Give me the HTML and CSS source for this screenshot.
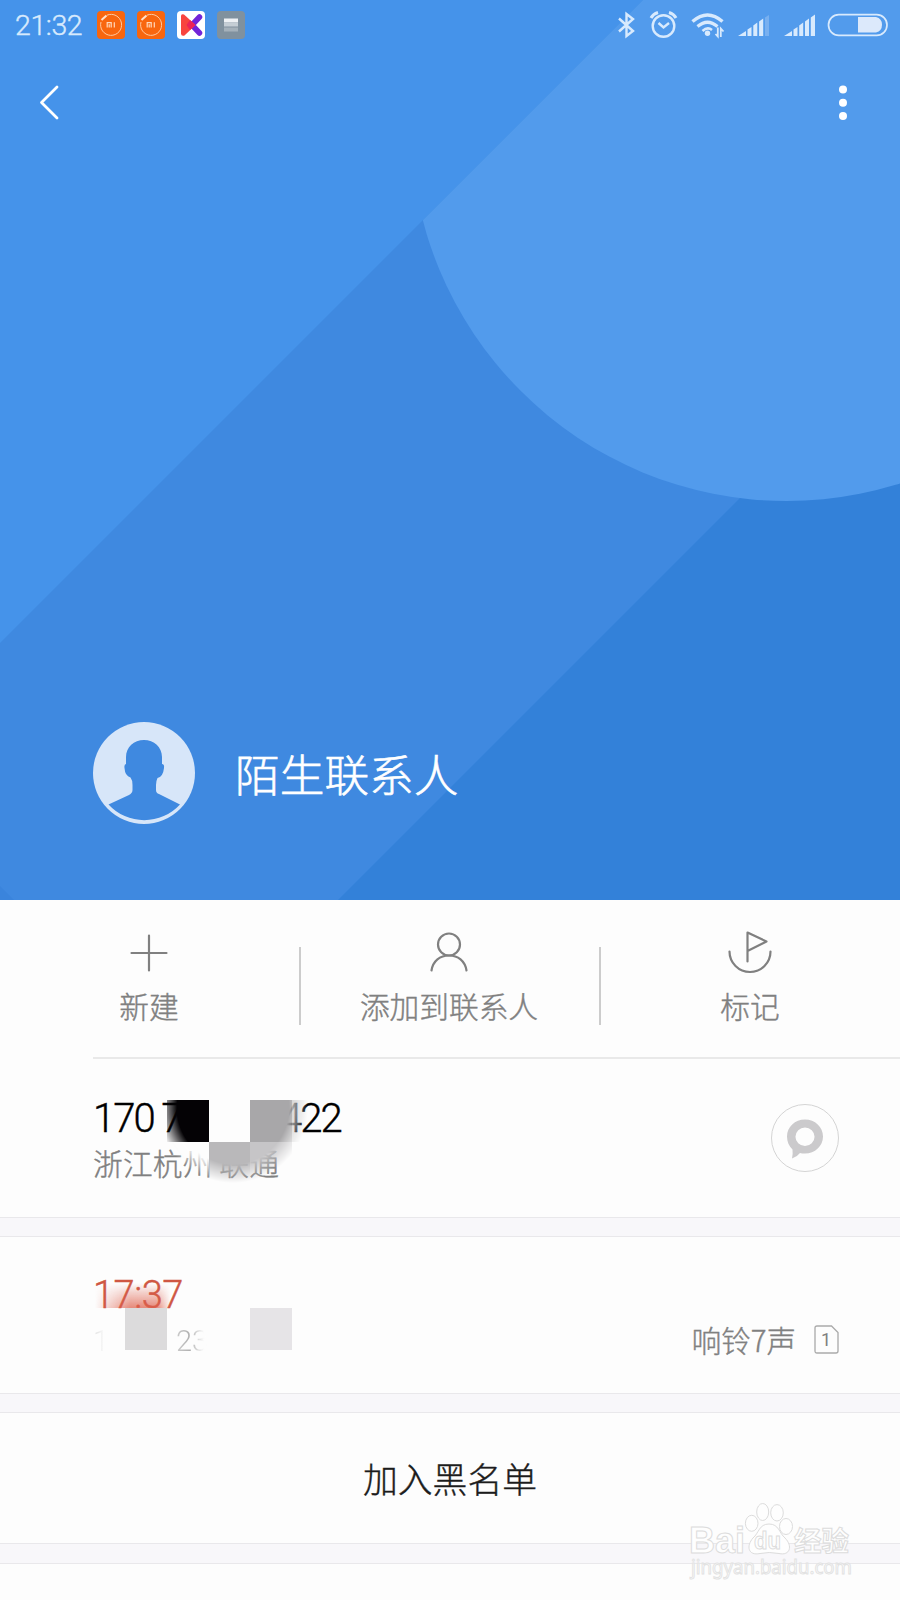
FILE: index.html
```html
<!DOCTYPE html>
<html lang="zh-CN">
<head>
    <meta charset="UTF-8">
    <meta name="viewport" content="width=device-width, initial-scale=1.0">
    <title>陌生联系人</title>
    <link rel="stylesheet" href="styles.css">
</head>
<body>
    <div class="hero">
        <svg class="hero-bg" viewBox="0 0 900 900">
            <defs>
                <clipPath id="band"><path d="M643 0H900V900H0V643Z"/></clipPath>
            </defs>
            <rect width="900" height="900" fill="#4593ea"/>
            <path d="M643 0H900V900H0V643Z" fill="#3f89e0"/>
            <path d="M900 338V900H338Z" fill="#3381d9"/>
            <path d="M0 886L14 900H0Z" fill="#3a84dc"/>
            <circle cx="786.500" cy="125" r="376" fill="#529bec" clip-path="url(#band)"/>
        </svg>

        <div class="status-bar">
            <span class="clock">21:32</span>
            <div class="notices">
                <svg width="30" height="30" viewBox="0 0 30 30">
                    <rect x="1" y="1" width="28" height="28" rx="4" fill="#f8660f"/>
                    <path d="M11 5.2A10.5 10.5 0 1 1 5 12" fill="none" stroke="#ffc9a0" stroke-width="1"/>
                    <path d="M5.5 10L10.5 5.5" stroke="#ffe3cf" stroke-width="2"/>
                    <path d="M11.200 17.500V12.700H15.200V17.500M13.200 14.200V17.500M18.300 12.300V17.500" fill="none" stroke="#ffd9bd" stroke-width="1.200"/>
                </svg>
                <svg width="30" height="30" viewBox="0 0 30 30">
                    <rect x="1" y="1" width="28" height="28" rx="4" fill="#f8660f"/>
                    <path d="M11 5.2A10.5 10.5 0 1 1 5 12" fill="none" stroke="#ffc9a0" stroke-width="1"/>
                    <path d="M5.5 10L10.5 5.5" stroke="#ffe3cf" stroke-width="2"/>
                    <path d="M11.200 17.500V12.700H15.200V17.500M13.200 14.200V17.500M18.300 12.300V17.500" fill="none" stroke="#ffd9bd" stroke-width="1.200"/>
                </svg>
                <svg width="30" height="30" viewBox="0 0 30 30">
                    <rect x="1" y="1" width="28" height="28" rx="4" fill="#fff"/>
                    <path d="M23.500 7L16 15L23.500 23" fill="none" stroke="#7224d8" stroke-width="5.500" stroke-linecap="round" stroke-linejoin="round"/>
                    <path d="M5 6Q5 3.500 8 4.500L19.500 15L8.500 25.500Q5 26.500 5 23.500Z" fill="#f8443f"/>
                    <path d="M14 10L19.500 15L14 20L10.500 15Z" fill="#ec2358"/>
                </svg>
                <svg width="30" height="30" viewBox="0 0 30 30">
                    <rect x="1" y="1" width="28" height="28" rx="4" fill="#80919e"/>
                    <rect x="8" y="8.500" width="14" height="4" fill="#eef1f4"/>
                    <rect x="8" y="12.500" width="14" height="4" fill="#c5ced5"/>
                    <rect x="8" y="17.500" width="14" height="4" fill="#a5b1ba"/>
                </svg>
            </div>
            <svg class="system" width="280" height="32" viewBox="612 9 280 32">
                <g fill="none" stroke="#d8eafd" stroke-width="2.400">
                    <path d="M619 18.500L633 31L626.500 36V14L633 19L619 31.500"/>
                    <circle cx="663.500" cy="26" r="10.800"/>
                    <path d="M658.500 23L663.500 27.500L669 23"/>
                    <path d="M651 18Q653 14 658 12.500M676 18Q674 14 669 12.500" stroke-width="3"/>
                    <path d="M692.500 21.500Q707.500 8.500 722.500 21.500" stroke-width="3.400"/>
                    <path d="M697.500 26.500Q707.500 18 717.500 26.500" stroke-width="3.200"/>
                    <path d="M702.500 31Q707.500 26.500 712 30" stroke-width="2.600"/>
                    <path d="M717.800 27.500V36.500L715.500 34M720.800 37V28.500L723.500 31.500" stroke-width="1.800"/>
                    <rect x="828.500" y="14.700" width="58.500" height="20.600" rx="10.300" stroke-width="1.700"/>
                </g>
                <g fill="#d8eafd">
                    <circle cx="707.500" cy="33.300" r="2.700"/>
                    <path d="M738 36L746 31V36ZM747.500 29.500L751.500 27V36H747.500ZM753.300 25.500L757.300 22.500V36H753.300ZM759.100 21.500L763.200 18.500V36H759.100Z"/>
                    <path d="M784 36L792 31V36ZM793.500 29.500L797.500 27V36H793.500ZM799.200 25.500L803.200 22.500V36H799.200ZM805 21.500L809 18.500V36H805ZM810.800 17.500L815 14.500V36H810.800Z"/>
                    <path d="M858 17H876A8 8 0 0 1 876 32.500H858Z" fill="#dce9fb"/>
                </g>
                <path d="M765 17.500L769 15V36H765Z" fill="#78b0f0"/>
            </svg>
        </div>

        <div class="nav">
            <svg width="24" height="40" viewBox="0 0 24 40">
                <path d="M21 5L5.500 20.500L21 36" fill="none" stroke="#fff" stroke-width="2.800" stroke-linecap="round" stroke-linejoin="round"/>
            </svg>
            <svg width="10" height="40" viewBox="0 0 10 40" fill="#fff">
                <circle cx="5" cy="7.500" r="4"/>
                <circle cx="5" cy="20.800" r="4"/>
                <circle cx="5" cy="34" r="4"/>
            </svg>
        </div>

        <div class="profile">
            <svg width="102" height="102" viewBox="0 0 102 102">
                <circle cx="51" cy="51" r="51" fill="#d7e6f9"/>
                <path d="M51 18C61 18 69 25 69 35V42Q71.500 42 71 46Q70 55 64.500 56Q63 59 63 63V68Q63 71 66 72L87 82.500A48.500 48.500 0 0 1 15.500 82.500L36 73Q39.500 71 39.500 68V63Q39.500 58 37.500 55.500Q32 54 31.500 46Q31 42 33 42V35C33 25 41 18 51 18Z" fill="#3f89e0"/>
            </svg>
            <span class="name">陌生联系人</span>
        </div>
    </div>

    <div class="actions">
        <div class="action">
            <svg width="48" height="48" viewBox="0 0 48 48">
                <path d="M24 6.500V41.500M6.500 24H41.500"/>
            </svg>
            <span>新建</span>
        </div>
        <div class="action">
            <svg width="48" height="48" viewBox="0 0 48 48">
                <circle cx="24" cy="15.500" r="11"/>
                <path d="M6.500 41.500C8 32 15 26.500 24 26.500S40 32 41.500 41.500"/>
            </svg>
            <span>添加到联系人</span>
        </div>
        <div class="action">
            <svg width="48" height="48" viewBox="0 0 48 48">
                <path d="M3.500 22.500A20.500 20.500 0 0 0 44.500 22.500M21.500 32.500V3.500L40.500 12.500L21.500 22"/>
            </svg>
            <span>标记</span>
        </div>
    </div>

    <div class="row phone">
        <div>
            <div class="number"><span>170 7</span><span>422</span></div>
            <div class="region">浙江杭州 联通</div>
        </div>
        <svg width="68" height="68" viewBox="0 0 68 68">
            <circle cx="34" cy="34" r="33.500" fill="none" stroke="#d4d4d4"/>
            <path fill-rule="evenodd" fill="#cbcacc" d="M34 15.500C44 15.500 52 23 52 32.500S44 49.500 34 49.500Q31 49.500 29 49Q26 53 21 54.500Q22 50 21.500 45.500C18 42 16 38 16 32.500C16 23 24 15.500 34 15.500ZM34 23.500A9.500 9.200 0 1 0 34 42A9.500 9.200 0 1 0 34 23.500Z"/>
        </svg>
        <div class="mosaic">
            <i class="black"></i><i class="white"></i><i class="gray"></i><i class="pale"></i>
            <i class="white"></i><i class="silver"></i><i class="light"></i><i class="white"></i>
        </div>
    </div>

    <div class="row call">
        <div class="when">
            <div class="time">17:37</div>
            <div class="date"><span>1</span><span>23</span></div>
        </div>
        <div class="ring">
            <span>响铃7声</span>
            <svg width="25" height="29" viewBox="0 0 25 29">
                <path d="M3 1H17.500L24 7.500V26Q24 28 22 28H3Q1 28 1 26V3Q1 1 3 1Z" fill="none" stroke="#aaa" stroke-width="1.300"/>
                <text x="12" y="20.500" text-anchor="middle">1</text>
            </svg>
        </div>
        <div class="smear"></div>
        <div class="block"></div>
        <div class="block second"></div>
    </div>

    <div class="row blacklist">加入黑名单</div>

    <svg class="watermark" width="190" height="95" viewBox="0 0 190 95">
        <g fill="#fefefe" stroke="#dcdcdc">
            <text class="logo" x="7" y="53" font-size="37" textLength="56" lengthAdjust="spacingAndGlyphs">Bai</text>
            <ellipse cx="69.700" cy="23.300" rx="6.300" ry="8"/>
            <ellipse cx="80.700" cy="12" rx="6" ry="8.500"/>
            <ellipse cx="95" cy="12.800" rx="6.300" ry="8.200"/>
            <ellipse cx="104" cy="26.500" rx="6.500" ry="8"/>
            <path d="M87 24C97 24 97 33 103 38C111 46 108 56 97 53.500Q87 51.500 78 53.500C66 56 64 46 71 38C77 33 77 24 87 24Z"/>
            <text class="logo" x="72" y="49" font-size="24" textLength="27" lengthAdjust="spacingAndGlyphs">du</text>
            <text class="logo" x="112" y="51" font-size="27.500">经验</text>
            <text class="site" x="9" y="74" font-size="20" textLength="161" lengthAdjust="spacingAndGlyphs">jingyan.baidu.com</text>
        </g>
    </svg>
</body>
</html>
```
FILE: styles.css
```css
* {
    box-sizing: border-box;
}
body {
    position: relative;
    width: 900px;
    height: 1600px;
    margin: 0;
    overflow: hidden;
    background: #fdfdfd;
    color: #808080;
    font-family: "Noto Sans CJK SC", sans-serif;
    font-weight: 300;
    font-size: 29.7px;
    -webkit-text-stroke: 0.4px;
}
svg {
    display: block;
    flex: none;
}
.hero {
    position: relative;
    display: flex;
    flex-direction: column;
    height: 900px;
}
.hero-bg {
    position: absolute;
    inset: 0;
    z-index: -1;
}

/* status bar */
.status-bar {
    display: flex;
    align-items: center;
    height: 50px;
    padding: 0 8px 0 15px;
}
.clock {
    width: 81px;
    color: #d8eafd;
    font-family: Roboto, sans-serif;
    font-size: 28.5px;
    letter-spacing: -0.4px;
    line-height: 50px;
    padding-top: 2px;
}
.notices {
    display: flex;
    gap: 10px;
}
.system {
    margin-left: auto;
}

.nav {
    display: flex;
    justify-content: space-between;
    padding: 32px 52px 0 36px;
}
.profile {
    display: flex;
    align-items: center;
    gap: 40px;
    margin-top: auto;
    padding: 0 0 76px 93px;
}
.name {
    color: #fff;
    font-size: 44.7px;
    line-height: 60px;
    -webkit-text-stroke: 0.6px;
}

/* actions */
.actions {
    display: grid;
    grid-template-columns: repeat(3, 1fr);
    height: 159px;
    background: linear-gradient(#e9e9e9, #e9e9e9) 93px 100% / 807px 2px no-repeat;
}
.action {
    position: relative;
    display: flex;
    flex-direction: column;
    align-items: center;
    padding: 29px 2px 0 0;
    line-height: 44px;
}
.action:last-child {
    padding-right: 0;
}
.action span {
    margin-top: 7px;
}
.action svg {
    fill: none;
    stroke: #808080;
    stroke-width: 2.2;
    stroke-linecap: round;
    stroke-linejoin: round;
}
.action + .action::before {
    content: "";
    position: absolute;
    left: -1px;
    top: 47px;
    width: 1.5px;
    height: 78px;
    background: #ccc;
}

/* rows */
.row {
    position: relative;
    display: flex;
    justify-content: space-between;
    padding: 0 61px 0 93px;
    border-bottom: 18px solid #f8f7fa;
    box-shadow: inset 0 -1px #e9e8eb, 0 1px #e9e8eb;
}
.phone {
    height: 177px;
    padding-top: 45px;
}
.number {
    display: flex;
    height: 64px;
    margin-top: -14px;
    color: #000;
    font-family: Roboto, sans-serif;
    font-size: 40px;
    line-height: 58px;
    letter-spacing: -2px;
}
.number span:first-child {
    width: 187px;
}
.region {
    line-height: 44px;
    margin-top: -13px;
    letter-spacing: 0.2px;
}
.mosaic {
    position: absolute;
    left: 167px;
    top: 41px;
    display: grid;
    grid-template-columns: repeat(4, 41.6px);
    grid-auto-rows: 41.6px;
    -webkit-mask: radial-gradient(circle at 66px 8px, #000 56px, transparent 75px);
    mask: radial-gradient(circle at 66px 8px, #000 56px, transparent 75px);
}
.black { background: #040205; }
.white { background: #fdfdfd; }
.gray { background: #a8a7a9; }
.silver { background: #b9b8ba; }
.light { background: #c6c5c7; }
.pale { background: #cfcfcf; }

.call {
    height: 176px;
    padding-top: 32px;
}
.time {
    color: #cf5743;
    font-family: Roboto, sans-serif;
    font-size: 38px;
    line-height: 54px;
    letter-spacing: -0.5px;
}
.date {
    display: flex;
    font-family: Roboto, sans-serif;
    font-size: 29px;
    line-height: 40px;
    margin-top: -1px;
}
.date span {
    width: 83px;
    color: transparent;
    background: linear-gradient(90deg, #ddd, #fdfdfd 13px);
    -webkit-background-clip: text;
    background-clip: text;
    -webkit-text-stroke: 0;
}
.date span + span {
    background-image: linear-gradient(90deg, #ccc, #b0b0b0 14px, #fdfdfd 28px);
}
.ring {
    display: flex;
    align-items: center;
    gap: 18px;
    height: 44px;
    margin-top: 49px;
    font-size: 29.5px;
}
.ring text {
    fill: #808080;
    font-family: Roboto, sans-serif;
    font-size: 18px;
    font-weight: 400;
}
.smear {
    position: absolute;
    left: 95px;
    top: 47px;
    width: 76px;
    height: 25px;
    background: linear-gradient(transparent, rgba(222, 98, 78, 0.75));
    -webkit-mask: linear-gradient(90deg, transparent, #000 35px, #000 62px, transparent);
    mask: linear-gradient(90deg, transparent, #000 35px, #000 62px, transparent);
}
.block {
    position: absolute;
    left: 125px;
    top: 72px;
    width: 42px;
    height: 42px;
    background: #dcdbdc;
}
.second {
    left: 250px;
    background: #e6e4e7;
}

.blacklist {
    justify-content: center;
    align-items: center;
    height: 151px;
    padding: 0;
    color: #1c1c1c;
    font-size: 34.8px;
    border-bottom-width: 19px;
}

.watermark {
    position: absolute;
    left: 682px;
    top: 1500px;
    -webkit-text-stroke: 1px #dcdcdc;
}
.logo {
    font-family: "Liberation Sans", "Noto Sans CJK SC", sans-serif;
    font-weight: 700;
}
.site {
    font-family: "Noto Sans", sans-serif;
    font-weight: 400;
    stroke: #e2e2e2;
}
```
